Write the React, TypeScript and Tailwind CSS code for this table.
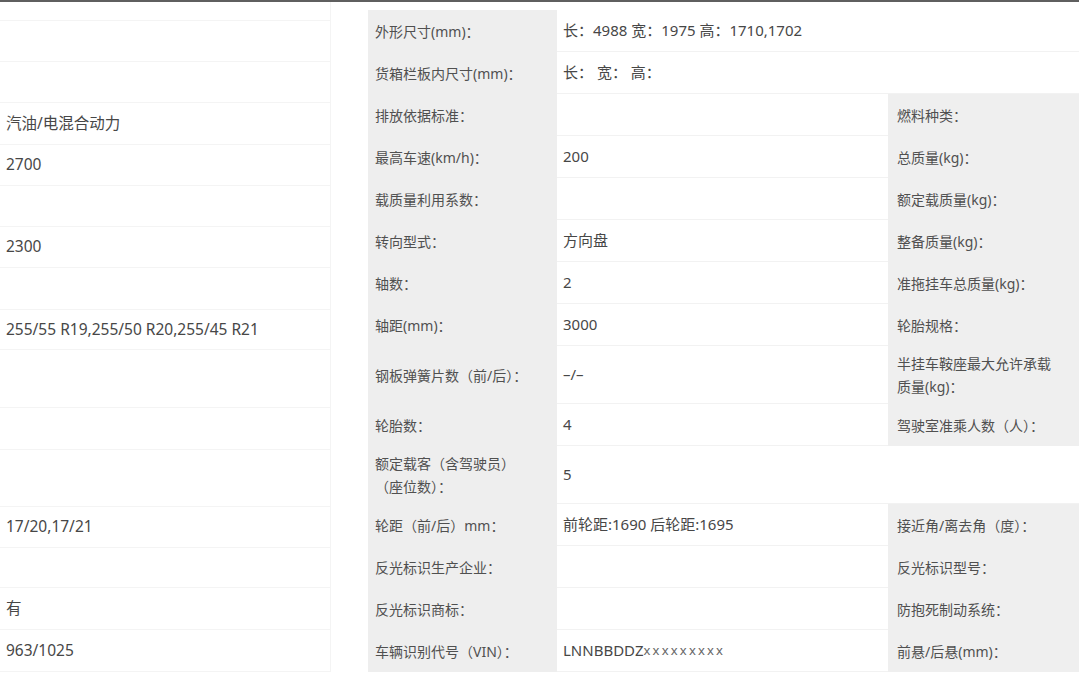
import type { ReactNode } from 'react';

type Row = {
  label: ReactNode;
  value?: ReactNode;
  side?: ReactNode;
  wide?: boolean; // value runs to the right edge, no second label
  tall?: boolean;
};

const VIN = (
  <>
    LNNBBDDZ
    <span className="text-[13px] tracking-[2.2px] text-[#666]">xxxxxxxxx</span>
  </>
);

const rows: Row[] = [
  { label: '外形尺寸(mm)：', value: '长：4988 宽：1975 高：1710,1702', wide: true },
  { label: '货箱栏板内尺寸(mm)：', value: '长： 宽： 高：', wide: true },
  { label: '排放依据标准：', side: '燃料种类：' },
  { label: '最高车速(km/h)：', value: '200', side: '总质量(kg)：' },
  { label: '载质量利用系数：', side: '额定载质量(kg)：' },
  { label: '转向型式：', value: '方向盘', side: '整备质量(kg)：' },
  { label: '轴数：', value: '2', side: '准拖挂车总质量(kg)：' },
  { label: '轴距(mm)：', value: '3000', side: '轮胎规格：' },
  {
    label: '钢板弹簧片数（前/后）：',
    value: '–/–',
    side: (
      <>
        半挂车鞍座最大允许承载
        <br />
        质量(kg)：
      </>
    ),
    tall: true,
  },
  { label: '轮胎数：', value: '4', side: '驾驶室准乘人数（人）：' },
  {
    label: (
      <>
        额定载客（含驾驶员）
        <br />
        （座位数）：
      </>
    ),
    value: '5',
    wide: true,
    tall: true,
  },
  { label: '轮距（前/后）mm：', value: '前轮距:1690 后轮距:1695', side: '接近角/离去角（度）：' },
  { label: '反光标识生产企业：', side: '反光标识型号：' },
  { label: '反光标识商标：', side: '防抱死制动系统：' },
  { label: '车辆识别代号（VIN）：', value: VIN, side: '前悬/后悬(mm)：' },
];

// values of the neighbouring block, cut off on the left
const leftRows: { h: string; v?: string }[] = [
  { h: 'h-[19px]' },
  { h: 'h-[41px]' },
  { h: 'h-[41px]' },
  { h: 'h-[42px]', v: '汽油/电混合动力' },
  { h: 'h-[41px]', v: '2700' },
  { h: 'h-[41px]' },
  { h: 'h-[41px]', v: '2300' },
  { h: 'h-[42px]' },
  { h: 'h-[40px]', v: '255/55 R19,255/50 R20,255/45 R21' },
  { h: 'h-[58px]' },
  { h: 'h-[42px]' },
  { h: 'h-[57px]' },
  { h: 'h-[41px]', v: '17/20,17/21' },
  { h: 'h-[40px]' },
  { h: 'h-[42px]', v: '有' },
  { h: 'h-[42px]', v: '963/1025' },
];

export default function App() {
  return (
    <div className="w-[1079px] h-[681px] overflow-hidden bg-white font-['Noto_Sans','Noto_Sans_CJK_SC',sans-serif]">
      <div className="h-[2px] bg-[#5f5f5f]" />
      <div className="flex">
        <div className="w-[331px] border-r border-[#f4f4f4]">
          {leftRows.map((r, i) => (
            <div
              key={i}
              className={`${r.h} flex items-center pl-[6px] border-b border-[#f4f4f4] text-[15.5px] text-[#474747]`}
            >
              {r.v}
            </div>
          ))}
        </div>

        <div className="ml-[37px] pt-[8px] grid grid-cols-[189px_331px_191px]">
          {rows.map((r, i) => {
            const h = r.tall ? 'h-[58px]' : 'h-[42px]';
            return (
              <div key={i} className="contents">
                <div
                  className={`${h} flex items-center pl-[7px] bg-[#eeeeee] text-[14px] leading-[23px] text-[#505050]`}
                >
                  <span>{r.label}</span>
                </div>
                <div
                  className={`${h} ${r.wide ? 'col-span-2' : ''} flex items-center pl-[6px] border-b border-[#f2f2f2] text-[15px] text-[#474747]`}
                >
                  {r.value}
                </div>
                {!r.wide && (
                  <div
                    className={`${h} flex items-center pl-[9px] bg-[#efefef] text-[14px] leading-[23px] text-[#505050]`}
                  >
                    <span>{r.side}</span>
                  </div>
                )}
              </div>
            );
          })}
        </div>
      </div>
    </div>
  );
}
